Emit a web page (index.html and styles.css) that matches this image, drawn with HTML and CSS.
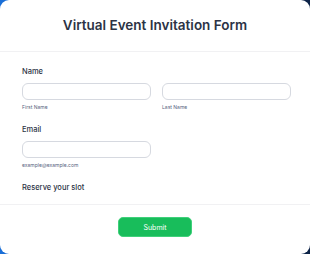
FILE: index.html
```html
<!DOCTYPE html>
<html lang="en">
<head>
    <meta charset="UTF-8">
    <meta name="viewport" content="width=device-width, initial-scale=1.0">
    <title>Virtual Event Invitation Form</title>
    <link rel="stylesheet" href="styles.css">
</head>
<body>
    <form class="form">
        <div class="form-header">
            <h1>Virtual Event Invitation Form</h1>
        </div>
        <div class="form-body">
            <div class="field">
                <label class="label">Name</label>
                <div class="row">
                    <div class="col">
                        <input type="text" class="input">
                        <span class="sublabel">First Name</span>
                    </div>
                    <div class="col">
                        <input type="text" class="input">
                        <span class="sublabel">Last Name</span>
                    </div>
                </div>
            </div>
            <div class="field">
                <label class="label">Email</label>
                <div class="row">
                    <div class="col">
                        <input type="email" class="input">
                        <span class="sublabel">example@example.com</span>
                    </div>
                    <div class="col"></div>
                </div>
            </div>
            <div class="field last">
                <label class="label">Reserve your slot</label>
            </div>
        </div>
        <div class="form-footer">
            <button type="button" class="submit">Submit</button>
        </div>
    </form>
</body>
</html>
```

FILE: styles.css
```css
*{
    margin:0;
    padding:0;
    box-sizing: border-box;
}
body{
    height: 254px;
    overflow: hidden;
    background: linear-gradient(90deg, #1a6fd8, #0c2246);
    font-family: Inter, "Noto Sans", sans-serif;
    color: #2c3345;
}
.form{
    height: 254px;
    background-color: #fff;
    border-radius: 9px;
}
.form-header{
    padding-top: 16px;
    height: 52px;
    border-bottom: 1px solid #f1f1f3;
    text-align: center;
}
h1{
    font-size: 13.5px;
    line-height: 18px;
    font-weight: 600;
}
.form-body{
    padding: 15px 19px 0 22px;
    border-bottom: 1px solid #f1f1f3;
}
.field{
    margin-bottom: 14px;
}
.field.last{
    margin-bottom: 11px;
}
.label{
    display: block;
    font-size: 7.5px;
    line-height: 10px;
    font-weight: 500;
    margin-bottom: 6px;
}
.row{
    display: flex;
    gap: 11px;
}
.col{
    flex: 1;
}
.input{
    display: block;
    width: 100%;
    height: 17px;
    border: 1px solid #d6d9e0;
    border-radius: 6px;
    background: #fff;
}
.sublabel{
    display: block;
    margin-top: 4px;
    font-size: 5px;
    line-height: 7px;
    color: #57647e;
}
.form-footer{
    padding-top: 12px;
    text-align: center;
}
.submit{
    display: inline-block;
    vertical-align: top;
    width: 74px;
    height: 20px;
    border: 1px solid #3fd07a;
    border-radius: 5px;
    background-color: #18bd5b;
    color: #fff;
    font-family: Inter, "Noto Sans", sans-serif;
    font-size: 7px;
}
```
